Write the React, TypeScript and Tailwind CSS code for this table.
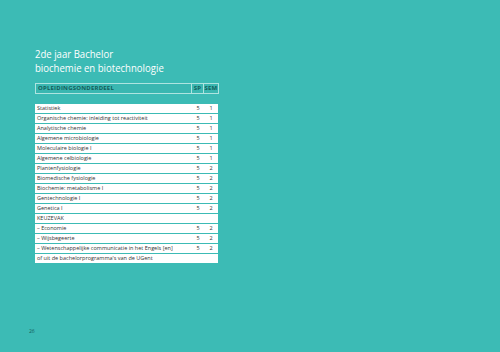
const rows: { name: string; sp?: string; sem?: string }[] = [
  { name: 'Statistiek', sp: '5', sem: '1' },
  { name: 'Organische chemie: inleiding tot reactiviteit', sp: '5', sem: '1' },
  { name: 'Analytische chemie', sp: '5', sem: '1' },
  { name: 'Algemene microbiologie', sp: '5', sem: '1' },
  { name: 'Moleculaire biologie I', sp: '5', sem: '1' },
  { name: 'Algemene celbiologie', sp: '5', sem: '1' },
  { name: 'Plantenfysiologie', sp: '5', sem: '2' },
  { name: 'Biomedische fysiologie', sp: '5', sem: '2' },
  { name: 'Biochemie: metabolisme I', sp: '5', sem: '2' },
  { name: 'Gentechnologie I', sp: '5', sem: '2' },
  { name: 'Genetica I', sp: '5', sem: '2' },
  { name: 'KEUZEVAK' },
  { name: '– Economie', sp: '5', sem: '2' },
  { name: '– Wijsbegeerte', sp: '5', sem: '2' },
  { name: '– Wetenschappelijke communicatie in het Engels [en]', sp: '5', sem: '2' },
  { name: "of uit de bachelorprogramma's van de UGent" },
];

export default function App() {
  return (
    <div
      className="relative w-[500px] h-[352px] bg-[#3cbbb5] overflow-hidden"
      style={{ fontFamily: '"Open Sans", "Liberation Sans", sans-serif' }}
    >
      <div className="pl-[35px] pt-[47px]">
        <h1 className="text-[11px] leading-[14px] text-white font-normal origin-left scale-x-[0.87] w-[170px]">
          <span className="block">2de jaar Bachelor</span>
          <span className="block">biochemie en biotechnologie</span>
        </h1>

        <div className="mt-[8px] w-[184px] h-[11px] flex border border-[#aee4e0] bg-[#3ab7b1] text-[#145e5b] text-[6px] font-bold leading-[9px] tracking-[0.2px]">
          <div className="flex-1 pl-[2px]">OPLEIDINGSONDERDEEL</div>
          <div className="w-[12px] border-l border-[#aee4e0] text-center">SP</div>
          <div className="w-[15px] border-l border-[#aee4e0] text-center">SEM</div>
        </div>

        <div className="mt-[10px] w-[183px] flex flex-col gap-px">
          {rows.map((r) => (
            <div
              key={r.name}
              className="h-[9px] flex bg-white text-[#333] text-[5.5px] leading-[9px]"
            >
              <div className="flex-1 pl-[2px] whitespace-nowrap">{r.name}</div>
              <div className="w-[12px] text-center">{r.sp}</div>
              <div className="w-[14px] text-center">{r.sem}</div>
            </div>
          ))}
        </div>
      </div>

      <div className="absolute left-[29px] top-[328px] text-[5px] leading-[6px] text-[#145e5b]">26</div>
    </div>
  );
}
